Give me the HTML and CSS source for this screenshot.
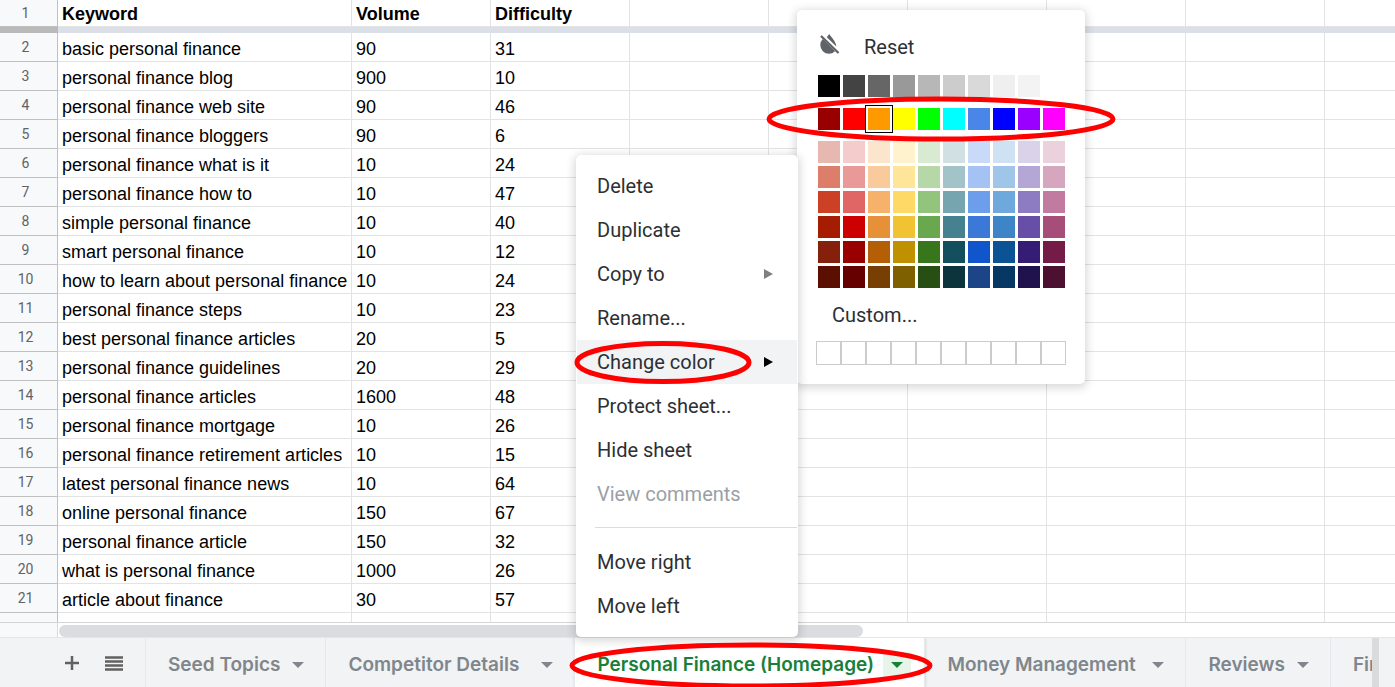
FILE: index.html
```html
<!DOCTYPE html>
<html lang="en">
<head>
<meta charset="utf-8">
<title>Keyword research</title>
<link rel="stylesheet" href="styles.css">
</head>
<body>
<main class="grid">
<table class="sheet">
<colgroup><col class="col-index"><col class="col-keyword"><col><col><col><col><col><col><col><col></colgroup>
<thead>
<tr><th class="index" scope="row">1</th><th scope="col">Keyword</th><th scope="col">Volume</th><th scope="col">Difficulty</th><td></td><td></td><td></td><td></td><td></td><td></td></tr>
<tr class="freeze"><td class="freeze-index"></td><td colspan="9"></td></tr>
</thead>
<tbody id="rows"></tbody>
</table>
</main>
<div class="scroll"><div class="corner"></div><div class="track"><div class="thumb"></div></div></div>
<footer class="bar">
<div class="tools">
<button class="tool" aria-label="Add sheet"><svg width="16" height="16" viewBox="0 0 16 16"><path d="M8 1v14M1 8h14" stroke="#616161" stroke-width="2.5"/></svg></button>
<button class="tool" aria-label="All sheets"><svg width="18" height="16" viewBox="0 0 18 16"><path d="M0 2.500h18M0 6.500h18M0 10.500h18M0 14.500h18" stroke="#616161" stroke-width="2.6"/></svg></button>
</div>
<nav class="tabs">
<button class="tab">Seed Topics<span class="arrow"></span></button>
<button class="tab medium">Competitor Details<span class="arrow"></span></button>
<button class="tab active">Personal Finance (Homepage)<span class="arrow"></span></button>
<button class="tab large">Money Management<span class="arrow"></span></button>
<button class="tab">Reviews<span class="arrow"></span></button>
<button class="tab">Fin</button>
</nav>
<div class="bar-end"></div>
</footer>

<section class="palette" aria-label="Tab color">
<button class="reset"><svg width="20" height="20" viewBox="0 0 20 20"><path d="M2.800 5A6.900 6.900 0 0 0 15 17.200ZM9.200 0L6.800 3.200 16.300 12.400C16 8 12.500 4.500 9.200 0Z" fill="#5f6368"/><path d="M1 2L18.500 19" stroke="#5f6368" stroke-width="2.400"/></svg>Reset</button>
<div id="swatches" class="swatches"></div>
<button class="custom">Custom...</button>
<div class="slots"><i></i><i></i><i></i><i></i><i></i><i></i><i></i><i></i><i></i><i></i></div>
</section>

<div class="menu" role="menu">
<button class="item" role="menuitem">Delete</button>
<button class="item" role="menuitem">Duplicate</button>
<button class="item more" role="menuitem">Copy to</button>
<button class="item" role="menuitem">Rename...</button>
<button class="item more current" role="menuitem">Change color</button>
<button class="item" role="menuitem">Protect sheet...</button>
<button class="item" role="menuitem">Hide sheet</button>
<button class="item" role="menuitem" disabled>View comments</button>
<hr class="rule">
<button class="item" role="menuitem">Move right</button>
<button class="item" role="menuitem">Move left</button>
</div>

<svg class="marks" width="1395" height="687" viewBox="0 0 1395 687" fill="none" stroke="#f00" stroke-width="5">
<ellipse cx="941" cy="119" rx="172" ry="20"/>
<ellipse cx="663" cy="362.500" rx="86" ry="19"/>
<ellipse cx="751" cy="665.500" rx="179" ry="20.500"/>
</svg>
<script src="sheet.js"></script>
</body>
</html>
```

FILE: styles.css
```css
* { box-sizing: border-box; }
body { margin: 0; height: 100vh; display: flex; flex-direction: column; overflow: hidden; background: #fff; font-family: "Liberation Sans", Arial, sans-serif; }
button { border: 0; padding: 0; background: none; font: inherit; color: inherit; text-align: left; }

.grid { flex: 1; min-height: 0; overflow: hidden; border-bottom: 1px solid #d5d5d5; }
.sheet { table-layout: fixed; width: 1464px; border-collapse: separate; border-spacing: 0; font-size: 18px; line-height: 20px; color: #000; }
.sheet col { width: 139px; }
.sheet .col-index { width: 58px; }
.sheet .col-keyword { width: 294px; }
.sheet th, .sheet td { height: 29px; padding: 4px 0 0 4px; border-right: 1px solid #e2e3e3; border-bottom: 1px solid #e2e3e3; text-align: left; white-space: nowrap; }
.sheet thead th, .sheet thead td { height: 27px; padding-top: 2px; }
.sheet .index { padding: 0 6px 0 0; border-color: #c0c0c0; background: #f8f9fa; color: #5f6368; font: 14px/20px Roboto, sans-serif; text-align: center; }
.sheet thead .index { padding-top: 0; }
.sheet .freeze td { height: 6px; padding: 0; border: 0; background: #dadfe8; }
.sheet .freeze .freeze-index { background: #b9b9b9; }

.scroll { display: flex; height: 14px; }
.corner { width: 58px; background: #f8f9fa; border-right: 1px solid #d9d9d9; }
.track { flex: 1; padding: 2px 1px 0; }
.thumb { width: 804px; height: 12px; border-radius: 6px; background: #dadce0; }

.bar { display: flex; height: 50px; border-top: 1px solid #e3e5e8; background: #f1f3f4; }
.tools { display: flex; align-items: center; gap: 25px; width: 145px; padding-left: 64px; }
.tool { display: flex; }
.tabs { flex: 1; min-width: 0; display: flex; overflow: hidden; color: #80868b; font: 600 19px/24px Inter, sans-serif; }
.tab { flex: none; display: flex; align-items: center; justify-content: space-between; gap: 4px; padding: 5px 13px 0 22px; border-left: 1px solid #e6e8eb; white-space: nowrap; }
.medium { min-width: 249px; }
.large { min-width: 261px; }
.arrow { display: grid; place-items: center; width: 28px; height: 26px; }
.arrow::before { content: ""; border: 6px solid transparent; border-top-color: currentColor; border-bottom: 0; }
.active { min-width: 350px; background: #fff; color: #188038; box-shadow: 1px 0 3px #c4c7ca; }
.active .arrow { background: #e6f4ea; }
.bar-end { width: 23px; border-left: 7px solid #dadcdc; }

.menu { position: absolute; left: 576px; top: 155px; width: 222px; padding: 9px 1px; border-radius: 5px; background: #fff; box-shadow: 0 2px 8px 2px rgba(60, 64, 67, .2); color: #2d2f33; font: 20px/24px Roboto, sans-serif; }
.item { display: flex; align-items: center; justify-content: space-between; width: 100%; height: 44px; padding: 0 24px 1px 20px; }
.item:disabled { color: #9aa0a6; }
.more::after { content: ""; border: 5px solid transparent; border-left: 9px solid #808080; border-right: 0; }
.current { background: #f1f3f4; }
.current::after { border-left-color: #000; }
.rule { height: 1px; margin: 11px 0 12px 18px; border: 0; background: #dadce0; }

.palette { position: absolute; left: 797px; top: 10px; width: 288px; padding: 22px 19px 19px; border-radius: 5px; background: #fff; box-shadow: 0 2px 8px 2px rgba(60, 64, 67, .2); color: #2d2f33; font: 20px/24px Roboto, sans-serif; }
.reset { display: flex; align-items: center; gap: 24px; height: 30px; padding-left: 4px; }
.reset svg { margin-bottom: 6px; }
.swatches { display: grid; grid-template-columns: repeat(10, 22px); gap: 3px; padding: 13px 0 0 2px; }
.swatch { height: 22px; }
.group-end { margin-bottom: 8px; }
.chosen { outline: 1px solid #000; outline-offset: 2px; }
.custom { display: block; margin: 15px 0 14px 16px; }
.slots { display: flex; }
.slots i { width: 25px; height: 24px; border: 1px solid #ccc; }

.marks { position: absolute; left: 0; top: 0; pointer-events: none; }
```

FILE: sheet.js
```js
const data = [
  ["basic personal finance", 90, 31], ["personal finance blog", 900, 10],
  ["personal finance web site", 90, 46], ["personal finance bloggers", 90, 6],
  ["personal finance what is it", 10, 24], ["personal finance how to", 10, 47],
  ["simple personal finance", 10, 40], ["smart personal finance", 10, 12],
  ["how to learn about personal finance", 10, 24], ["personal finance steps", 10, 23],
  ["best personal finance articles", 20, 5], ["personal finance guidelines", 20, 29],
  ["personal finance articles", 1600, 48], ["personal finance mortgage", 10, 26],
  ["personal finance retirement articles", 10, 15], ["latest personal finance news", 10, 64],
  ["online personal finance", 150, 67], ["personal finance article", 150, 32],
  ["what is personal finance", 1000, 26], ["article about finance", 30, 57], ["", "", ""]
];
document.getElementById("rows").innerHTML = data.map((row, i) =>
  `<tr><th class="index" scope="row">${row[0] ? i + 2 : ""}</th>${row.map(v => `<td>${v}</td>`).join("")}${"<td></td>".repeat(6)}</tr>`).join("");

const colors = [
  "000000 434343 666666 999999 b7b7b7 cccccc d9d9d9 efefef f3f3f3 ffffff",
  "980000 ff0000 ff9900 ffff00 00ff00 00ffff 4a86e8 0000ff 9900ff ff00ff",
  "e6b8af f4cccc fce5cd fff2cc d9ead3 d0e0e3 c9daf8 cfe2f3 d9d2e9 ead1dc",
  "dd7e6b ea9999 f9cb9c ffe599 b6d7a8 a2c4c9 a4c2f4 9fc5e8 b4a7d6 d5a6bd",
  "cc4125 e06666 f6b26b ffd966 93c47d 76a5af 6d9eeb 6fa8dc 8e7cc3 c27ba0",
  "a61c00 cc0000 e69138 f1c232 6aa84f 45818e 3c78d8 3d85c6 674ea7 a64d79",
  "85200c 990000 b45f06 bf9000 38761d 134f5c 1155cc 0b5394 351c75 741b47",
  "5b0f00 660000 783f04 7f6000 274e13 0c343d 1c4587 073763 20124d 4c1130"
];
document.getElementById("swatches").innerHTML = colors.map((line, r) => line.split(" ").map(c =>
  `<button class="swatch${r < 2 ? " group-end" : ""}${c === "ff9900" ? " chosen" : ""}" style="background:#${c}" aria-label="#${c}"></button>`).join("")).join("");
```
